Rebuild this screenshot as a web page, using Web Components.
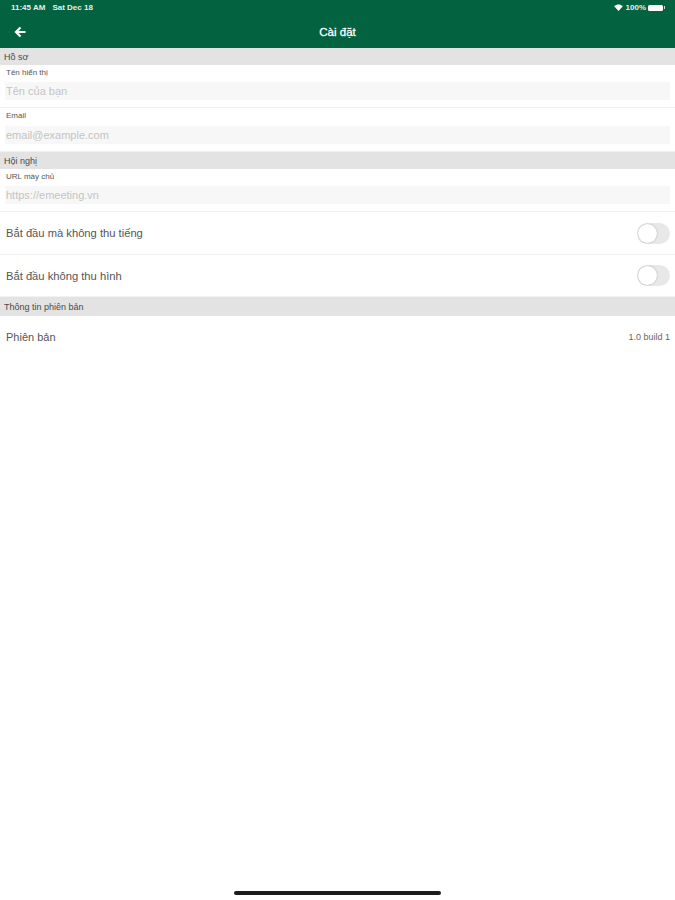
<!DOCTYPE html>
<html lang="vi">
<head>
<meta charset="utf-8">
<title>Cài đặt</title>
<style>
  html, body { margin: 0; padding: 0; background: #fff; }
  body { font-family: "Liberation Sans", Arial, sans-serif; }
</style>
</head>
<body>
<settings-app>
  <app-header title="Cài đặt"></app-header>

  <section-title>Hồ sơ</section-title>
  <field-row label="Tên hiển thị" placeholder="Tên của bạn"></field-row>
  <field-row label="Email" placeholder="email@example.com" tall></field-row>

  <section-title>Hội nghị</section-title>
  <field-row label="URL máy chủ" placeholder="https://emeeting.vn"></field-row>
  <toggle-row tall>Bắt đầu mà không thu tiếng</toggle-row>
  <toggle-row>Bắt đầu không thu hình</toggle-row>

  <section-title tall>Thông tin phiên bản</section-title>
  <info-row value="1.0 build 1">Phiên bản</info-row>
</settings-app>

<script>
class SettingsApp extends HTMLElement {
  connectedCallback() {
    this.attachShadow({ mode: 'open' });
    this.shadowRoot.innerHTML = `
      <style>
        :host { display: flex; flex-direction: column; height: 100vh; overflow: hidden; }
        main { flex: 1; display: block; }
        .home { height: 4px; width: 207px; margin: 0 auto 5px; background: #1c1c1c; border-radius: 2px; flex: none; }
      </style>
      <main><slot></slot></main>
      <div class="home"></div>
    `;
  }
}

class AppHeader extends HTMLElement {
  connectedCallback() {
    this.attachShadow({ mode: 'open' });
    this.shadowRoot.innerHTML = `
      <style>
        :host { display: block; height: 48px; background: #03623f; color: #fff; box-sizing: border-box; }
        .status {
          height: 15px; padding: 0 10px 0 11px;
          display: flex; justify-content: space-between; align-items: center;
          font-size: 8px; font-weight: bold; color: #e6f0ec;
        }
        .status .left { display: flex; gap: 7px; }
        .status .right { display: flex; align-items: center; gap: 2px; }
        .battery { width: 15px; height: 6px; background: #fff; border-radius: 1.5px; }
        .nub { width: 1px; height: 3px; background: #cfe0d9; margin-left: -1px; }
        .bar { height: 33px; display: grid; grid-template-columns: 40px 1fr 40px; align-items: center; }
        .back { display: flex; padding-left: 14px; }
        h1 { margin: 0; padding-top: 1px; text-align: center; font-size: 11.500px; font-weight: normal; -webkit-text-stroke: .3px #fff; }
      </style>
      <div class="status">
        <div class="left"><span>11:45 AM</span><span>Sat Dec 18</span></div>
        <div class="right">
          <svg width="9" height="7" viewBox="0 0 10 8" style="margin-right:1px"><path fill="#fff" d="M5 8 0 2.6C2.8-.1 7.200-.1 10 2.600z"/></svg>
          <span>100%</span>
          <span class="battery"></span><span class="nub"></span>
        </div>
      </div>
      <div class="bar">
        <div class="back">
          <svg width="12" height="12" viewBox="0 0 12 12" fill="none" stroke="#fff" stroke-width="2.200"><path d="M11.500 6H2M6.500 1.500 2 6l4.500 4.500"/></svg>
        </div>
        <h1>${this.getAttribute('title')}</h1>
        <div></div>
      </div>
    `;
  }
}

class SectionTitle extends HTMLElement {
  connectedCallback() {
    this.attachShadow({ mode: 'open' });
    this.shadowRoot.innerHTML = `
      <style>
        :host {
          display: flex; align-items: center; box-sizing: border-box;
          height: 17px; padding-left: 4px;
          background: #e3e3e3; color: #4a4a4a; font-size: 9px;
        }
        :host([tall]) { height: 19px; }
      </style>
      <slot></slot>
    `;
  }
}

class FieldRow extends HTMLElement {
  connectedCallback() {
    this.attachShadow({ mode: 'open' });
    this.shadowRoot.innerHTML = `
      <style>
        :host { display: block; height: 43px; box-sizing: border-box; border-bottom: 1px solid #f2f2f2; padding-left: 5px; }
        :host([tall]) { height: 44px; }
        label { display: block; height: 17px; padding: 2px 0 0 1px; box-sizing: border-box; font-size: 8px; line-height: 12px; color: #555; }
        :host([tall]) label { height: 18px; }
        input {
          display: block; width: 100%; height: 18px; box-sizing: border-box;
          border: 0; outline: 0; margin: 0; padding: 0 0 0 1px;
          background: #f7f7f7; font: 11px "Liberation Sans", Arial, sans-serif;
        }
        input::placeholder { color: #c4c4c4; opacity: 1; }
        .wrap { padding-right: 5px; }
      </style>
      <label>${this.getAttribute('label')}</label>
      <div class="wrap"><input placeholder="${this.getAttribute('placeholder')}"></div>
    `;
  }
}

class ToggleRow extends HTMLElement {
  connectedCallback() {
    this.attachShadow({ mode: 'open' });
    this.shadowRoot.innerHTML = `
      <style>
        :host {
          display: flex; justify-content: space-between; align-items: center;
          height: 42px; box-sizing: border-box; padding: 0 5px 0 6px;
          border-bottom: 1px solid #f2f2f2;
          font-size: 11.200px; color: #555;
        }
        :host([tall]) { height: 43px; }
        .switch { width: 33px; height: 21px; border-radius: 11px; background: #e8e8e8; display: flex; }
        .knob { width: 19px; height: 19px; margin: 1px; border-radius: 50%; background: #fff; box-shadow: 0 0 1.500px rgba(0,0,0,.35); }
      </style>
      <span><slot></slot></span>
      <span class="switch"><span class="knob"></span></span>
    `;
  }
}

class InfoRow extends HTMLElement {
  connectedCallback() {
    this.attachShadow({ mode: 'open' });
    this.shadowRoot.innerHTML = `
      <style>
        :host {
          display: flex; justify-content: space-between; align-items: center;
          height: 42px; padding: 0 5px 0 6px;
          font-size: 11px; color: #555;
        }
        .value { font-size: 9px; color: #666; }
      </style>
      <span><slot></slot></span>
      <span class="value">${this.getAttribute('value')}</span>
    `;
  }
}

customElements.define('settings-app', SettingsApp);
customElements.define('app-header', AppHeader);
customElements.define('section-title', SectionTitle);
customElements.define('field-row', FieldRow);
customElements.define('toggle-row', ToggleRow);
customElements.define('info-row', InfoRow);
</script>
</body>
</html>
